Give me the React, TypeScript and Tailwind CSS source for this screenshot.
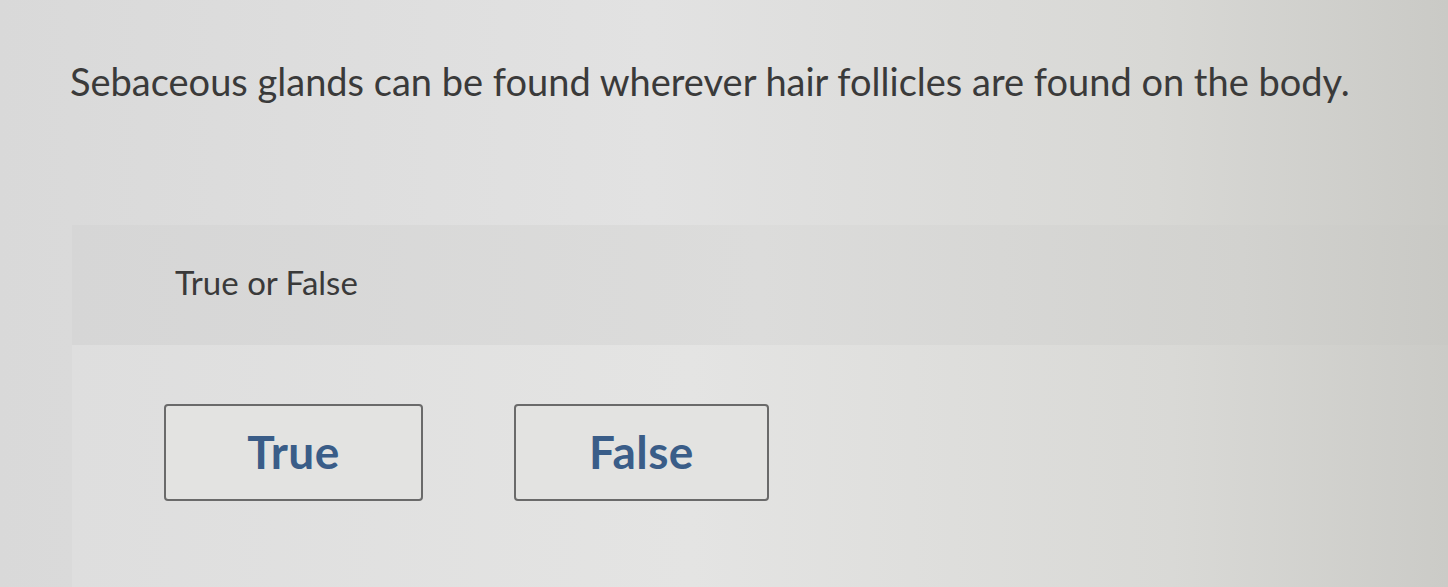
import React from "react";

function ChoiceButton({ label, width }: { label: string; width: string }) {
  return (
    <button
      type="button"
      className={`flex h-[97px] ${width} items-center justify-center rounded-[4px] border-2 border-[#6a6a6a] bg-[#e3e3e1] pb-[2px] text-[46px] font-bold tracking-[0.01em] text-[#3a5d88] font-['Lato',sans-serif]`}
    >
      {label}
    </button>
  );
}

export default function App() {
  return (
    <div className="flex h-[587px] w-full flex-col overflow-hidden bg-[linear-gradient(90deg,#d9d9d9_0%,#e2e2e2_45%,#d8d8d5_80%,#cacac6_100%)] font-['Lato',sans-serif]">
      <div className="h-[225px] shrink-0 pl-[70px] pt-[56px]">
        <p className="text-[38px] leading-[50px] text-[#3a3a3a]">
          Sebaceous glands can be found wherever hair follicles are found on the body.
        </p>
      </div>
      <div className="ml-[72px] flex flex-1 flex-col">
        <div className="flex h-[120px] items-center bg-[linear-gradient(90deg,#d6d6d6_0%,#dcdcdb_50%,#d2d2cf_85%,#c9c9c5_100%)] pl-[103px] pb-[4px]">
          <span className="text-[33px] text-[#3a3a3a]">True or False</span>
        </div>
        <div className="flex flex-1 gap-[91px] bg-[linear-gradient(90deg,#dedede_0%,#e4e4e3_45%,#d9d9d6_80%,#cbcbc7_100%)] pl-[92px] pt-[59px]">
          <ChoiceButton label="True" width="w-[259px]" />
          <ChoiceButton label="False" width="w-[255px]" />
        </div>
      </div>
    </div>
  );
}
